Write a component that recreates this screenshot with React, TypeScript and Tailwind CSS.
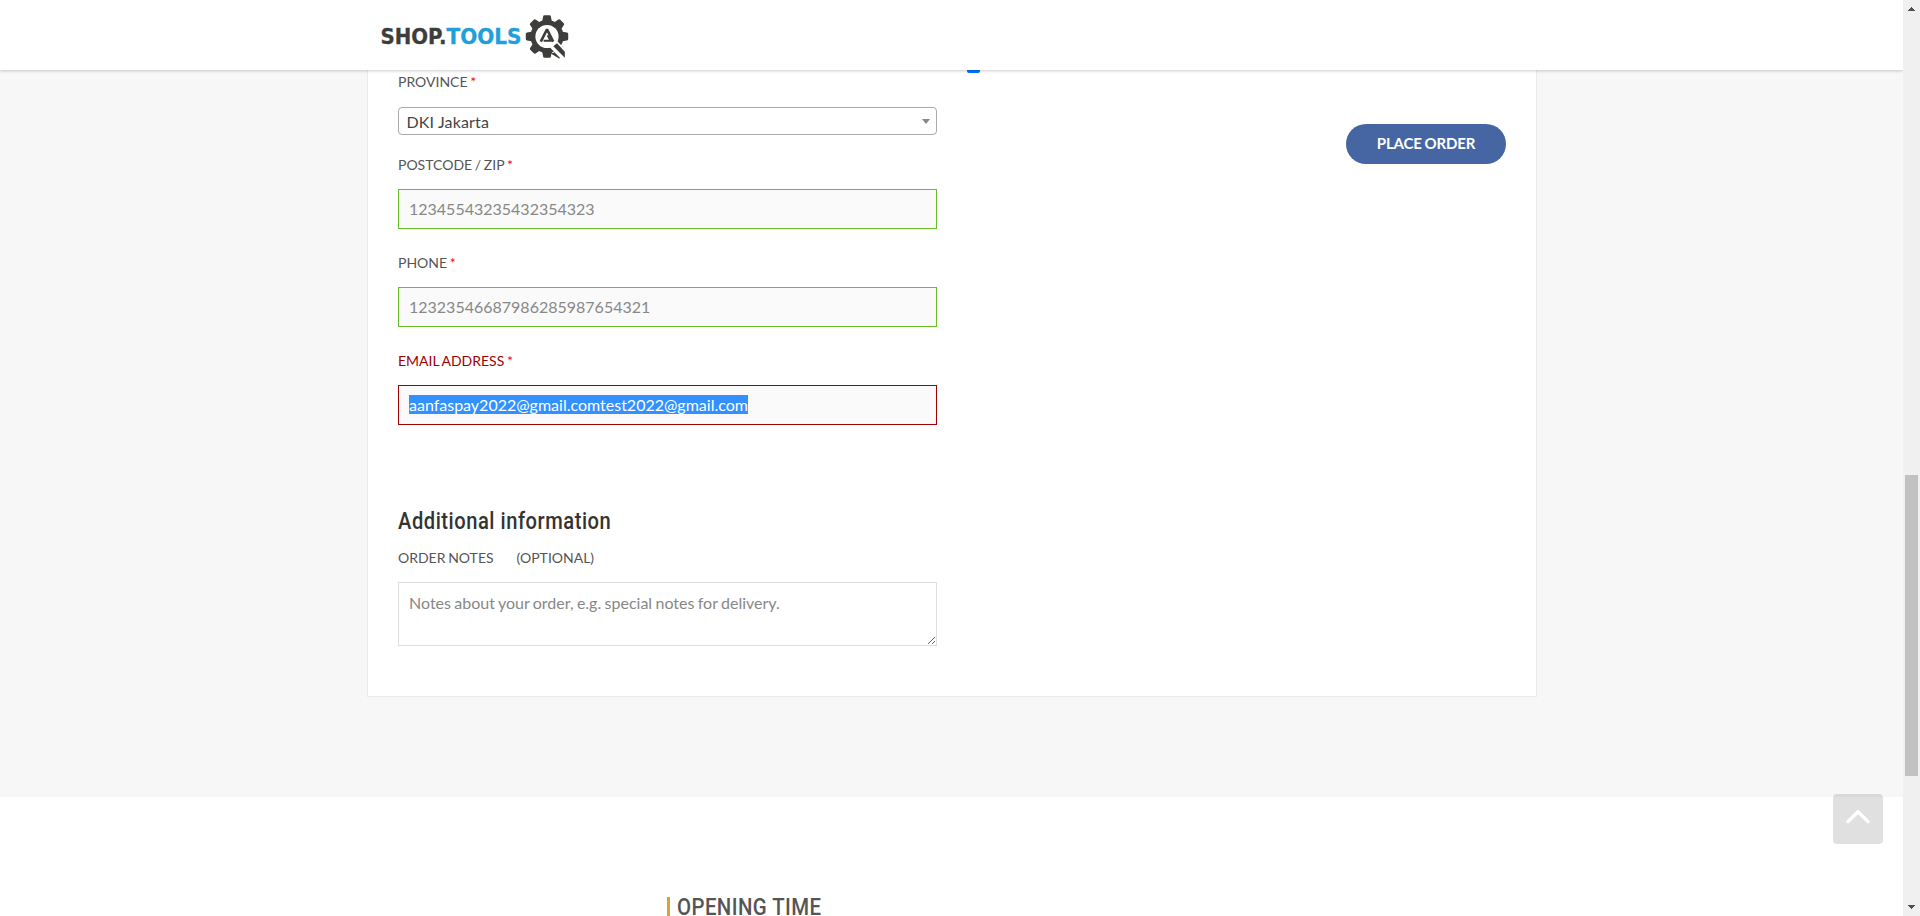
import type { ReactNode } from "react";

function Logo() {
  const teeth = [0, 45, 90, 180, 225, 270, 315];
  return (
    <svg width="190" height="44" viewBox="0 0 190 44" className="block" aria-label="SHOP.TOOLS">
      <g fontFamily="'DejaVu Sans', sans-serif" fontWeight="700" fontSize="20.5" strokeWidth="0.3">
        <text x="0.5" y="28.5" fill="#3d3e3b" stroke="#3d3e3b" textLength="66" lengthAdjust="spacingAndGlyphs">SHOP.</text>
        <text x="66.5" y="28.5" fill="#209fdc" stroke="#209fdc" textLength="75" lengthAdjust="spacingAndGlyphs">TOOLS</text>
      </g>
      <g transform="translate(167 21.5)">
        {teeth.map((a) => (
          <path key={a} d="M-5 -14 L-3.9 -20 Q-3.7 -21.2 -2.5 -21.2 H2.5 Q3.7 -21.2 3.9 -20 L5 -14 Z" fill="#3d3e3b" transform={`rotate(${a})`} />
        ))}
        <circle r="16.6" fill="#3d3e3b" />
        <path d="M-1 14 L6 16.5 L11 14 L12 12 L16 10 L17 20 L12 22 Z" fill="#3d3e3b" />
        <circle r="11.6" fill="#fff" />
        <path d="M3 11 L10 4.5 L22 16.5 V24 H15.5 Z" fill="#fff" />
        <path d="M6.3 9.8 L10 6.8 L17.8 15.2 V21.2 Z" fill="#3d3e3b" />
        <path d="M-6.2 5.2 L0 -7.2 L6.2 5.2" fill="none" stroke="#3d3e3b" strokeWidth="2.6" strokeLinejoin="bevel" />
        <path d="M-3.4 4.3 H3.6 L0.6 -1.2" fill="none" stroke="#3d3e3b" strokeWidth="1.9" />
      </g>
    </svg>
  );
}

function Label({ children, className = "" }: { children: ReactNode; className?: string }) {
  return (
    <label className={`block h-5 text-sm leading-5 whitespace-pre [word-spacing:-0.9px] ${className}`}>
      {children}
      <span className="text-[#ff0000]"> *</span>
    </label>
  );
}

function Field({ label, children, invalid = false }: { label: string; children: ReactNode; invalid?: boolean }) {
  return (
    <div className="mb-6">
      <Label className={invalid ? "text-[#a00000]" : "text-[#555]"}>{label}</Label>
      <div
        className={`mt-3.5 flex h-10 items-start border bg-[#fafafa] px-2.5 pt-[9px] text-base leading-[19px] text-[#888] ${
          invalid ? "border-[#a00000]" : "border-[#69bf29]"
        }`}
      >
        {children}
      </div>
    </div>
  );
}

function ScrollBar() {
  return (
    <div className="flex h-full w-[17px] shrink-0 flex-col items-center bg-[#f0f0f0]">
      <svg width="17" height="17" shapeRendering="crispEdges" className="shrink-0">
        <path d="M8 7h1v1h1v1h1v1h1v1H5v-1h1V9h1V8h1z" fill="#505050" />
      </svg>
      <div className="mt-[458px] h-[301px] w-[13px] bg-[#c1c1c1]" />
      <svg width="17" height="17" shapeRendering="crispEdges" className="mt-auto shrink-0">
        <path d="M5 6h7v1h-1v1h-1v1H9v1H8V9H7V8H6V7H5z" fill="#505050" />
      </svg>
    </div>
  );
}

export default function App() {
  return (
    <div className="relative flex h-[916px] w-full overflow-hidden bg-white font-[Lato,sans-serif]">
      <div className="flex min-w-0 flex-1 flex-col overflow-hidden">
        <header className="relative z-10 h-[70px] shrink-0 bg-white pt-[15px] pl-[380px] shadow-[0_1px_3px_rgba(0,0,0,0.2)]">
          <Logo />
        </header>

        <section className="h-[727px] shrink-0 bg-[#f7f7f7] pl-[367px]">
          <div className="flex h-[627px] w-[1170px] border border-t-0 border-[#ebebeb] bg-white px-[30px]">
            <div className="w-[539px] pt-0.5">
              <div className="mb-5">
                <Label className="text-[#555]">PROVINCE</Label>
                <div className="mt-[15px] flex h-7 items-center justify-between rounded border border-[#aaa] pr-[6px] pl-[7.5px] text-base text-[#444]">
                  <span className="pt-0.5 tracking-[0.15px]">DKI Jakarta</span>
                  <svg width="8" height="5" viewBox="0 0 8 5">
                    <path d="M0 0H8L4 5Z" fill="#888" />
                  </svg>
                </div>
              </div>
              <Field label="POSTCODE / ZIP">12345543235432354323</Field>
              <Field label="PHONE">12323546687986285987654321</Field>
              <Field label="EMAIL ADDRESS" invalid>
                <span className="bg-[#3390ff] text-white">aanfaspay2022@gmail.comtest2022@gmail.com</span>
              </Field>

              <h3 className="mt-[82px] h-[30px] w-max origin-left scale-x-[0.875] font-[Roboto,sans-serif] text-[23px] leading-[30px] font-medium tracking-[0.62px] whitespace-nowrap text-[#333]">
                Additional information
              </h3>
              <div className="mt-[11px] flex h-5 gap-[23px] text-sm leading-5 text-[#555]">
                <span className="[word-spacing:-0.9px]">ORDER NOTES</span>
                <span>(OPTIONAL)</span>
              </div>
              <textarea
                className="mt-3.5 block h-16 w-full resize border border-[#ddd] bg-white px-2.5 py-[7px] text-base leading-[26px] [word-spacing:-0.75px] placeholder:text-[#888]"
                placeholder="Notes about your order, e.g. special notes for delivery."
              />
            </div>
            <div className="flex flex-1 flex-col">
              <div className="ml-[30px] h-[3px] w-[13px] rounded-b-xs bg-[#0073ff]" />
              <button className="mt-[51px] h-10 w-40 self-end rounded-full bg-[#4666a3] pb-px text-[15px] font-bold tracking-[-0.15px] text-white [word-spacing:-0.8px]">
                PLACE ORDER
              </button>
            </div>
          </div>
        </section>

        <footer className="flex flex-1 items-start bg-white pt-[100px] pl-[667px]">
          <div className="h-[19px] w-[3px] bg-[#d2a539]" />
          <h4 className="-mt-[2px] ml-[7px] h-[21px] w-max origin-left scale-x-[0.85] font-[Roboto,sans-serif] text-2xl leading-[24px] font-medium tracking-[0.5px] whitespace-nowrap text-[#555]">
            OPENING TIME
          </h4>
        </footer>
      </div>

      <ScrollBar />

      <button className="absolute top-[794px] left-[1833px] z-20 flex h-[50px] w-[50px] justify-center rounded bg-black/12 pt-4" aria-label="Back to top">
        <svg width="24" height="14" viewBox="0 0 24 14" fill="none">
          <path d="M2 11.5L12 1.8L22 11.5" stroke="#fff" strokeWidth="3.4" strokeLinecap="round" />
        </svg>
      </button>
    </div>
  );
}
